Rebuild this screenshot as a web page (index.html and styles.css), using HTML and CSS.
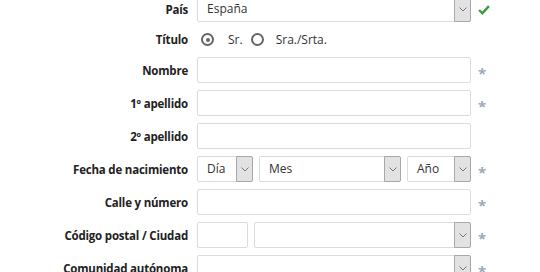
FILE: index.html
```html
<!DOCTYPE html>
<html lang="es">
<head>
    <meta charset="UTF-8">
    <title>Datos personales</title>
    <link rel="stylesheet" href="styles.css">
</head>
<body>
    <form class="form">
        <div class="row row-first">
            <label class="label">País</label>
            <div class="control">
                <div class="select full">
                    <span class="select-text">España</span>
                    <span class="arrow"><svg width="8" height="5" viewBox="0 0 8 5"><path d="M0.5 0.5 L4 4 L7.5 0.5" fill="none" stroke="#777" stroke-width="1"/></svg></span>
                </div>
            </div>
            <span class="mark">
                <svg class="check" width="11" height="9" viewBox="0 0 11 9"><path d="M1 4.5 L4 7.5 L10 1" fill="none" stroke="#3b9a3b" stroke-width="2.2"/></svg>
            </span>
        </div>

        <div class="row row-radio">
            <label class="label">Título</label>
            <div class="control radios">
                <span class="radio checked"></span><span class="radio-text">Sr.</span>
                <span class="radio"></span><span class="radio-text">Sra./Srta.</span>
            </div>
            <span class="mark"></span>
        </div>

        <div class="row">
            <label class="label">Nombre</label>
            <div class="control"><div class="input full"></div></div>
            <span class="mark star">*</span>
        </div>

        <div class="row">
            <label class="label">1º apellido</label>
            <div class="control"><div class="input full"></div></div>
            <span class="mark star">*</span>
        </div>

        <div class="row">
            <label class="label">2º apellido</label>
            <div class="control"><div class="input full"></div></div>
            <span class="mark"></span>
        </div>

        <div class="row">
            <label class="label">Fecha de nacimiento</label>
            <div class="control date">
                <div class="select day">
                    <span class="select-text">Día</span>
                    <span class="arrow"><svg width="8" height="5" viewBox="0 0 8 5"><path d="M0.5 0.5 L4 4 L7.5 0.5" fill="none" stroke="#777" stroke-width="1"/></svg></span>
                </div>
                <div class="select month">
                    <span class="select-text">Mes</span>
                    <span class="arrow"><svg width="8" height="5" viewBox="0 0 8 5"><path d="M0.5 0.5 L4 4 L7.5 0.5" fill="none" stroke="#777" stroke-width="1"/></svg></span>
                </div>
                <div class="select year">
                    <span class="select-text">Año</span>
                    <span class="arrow"><svg width="8" height="5" viewBox="0 0 8 5"><path d="M0.5 0.5 L4 4 L7.5 0.5" fill="none" stroke="#777" stroke-width="1"/></svg></span>
                </div>
            </div>
            <span class="mark star">*</span>
        </div>

        <div class="row">
            <label class="label">Calle y número</label>
            <div class="control"><div class="input full"></div></div>
            <span class="mark star">*</span>
        </div>

        <div class="row">
            <label class="label">Código postal / Ciudad</label>
            <div class="control city">
                <div class="input postal"></div>
                <div class="select grow">
                    <span class="select-text"></span>
                    <span class="arrow"><svg width="8" height="5" viewBox="0 0 8 5"><path d="M0.5 0.5 L4 4 L7.5 0.5" fill="none" stroke="#777" stroke-width="1"/></svg></span>
                </div>
            </div>
            <span class="mark star">*</span>
        </div>

        <div class="row">
            <label class="label">Comunidad autónoma</label>
            <div class="control">
                <div class="select full">
                    <span class="select-text"></span>
                    <span class="arrow"><svg width="8" height="5" viewBox="0 0 8 5"><path d="M0.5 0.5 L4 4 L7.5 0.5" fill="none" stroke="#777" stroke-width="1"/></svg></span>
                </div>
            </div>
            <span class="mark star">*</span>
        </div>
    </form>
</body>
</html>
```

FILE: styles.css
```css
* {
    margin: 0;
    padding: 0;
    box-sizing: border-box;
}

html {
    height: 272px;
    overflow: hidden;
}

body {
    background: #ffffff;
    color: #222222;
    font-family: "Open Sans", "Liberation Sans", Arial, sans-serif;
    font-size: 12px;
    overflow: hidden;
}

.form {
    margin-top: -4px;
}

.row {
    display: grid;
    grid-template-columns: 188px 274px 20px;
    column-gap: 9px;
    align-items: center;
    height: 26px;
    margin-bottom: 7px;
}

.row-radio {
    height: 21px;
    margin-top: 7px;
}

.label {
    text-align: right;
    font-weight: 700;
    font-size: 11.5px;
    letter-spacing: -0.2px;
    color: #222222;
    white-space: nowrap;
}

.control {
    display: flex;
    height: 100%;
    align-items: center;
}

.input,
.select {
    height: 26px;
    border: 1px solid #dcdcdc;
    border-radius: 2px;
    background: #ffffff;
}

.full {
    width: 100%;
}

.select {
    display: flex;
    align-items: stretch;
}

.select-text {
    flex: 1;
    padding-left: 9px;
    line-height: 24px;
    color: #333333;
}

.arrow {
    width: 17px;
    margin: -1px -1px -1px 0;
    background: #e2e2e2;
    border: 1px solid #a8a8a8;
    border-radius: 0 2px 2px 0;
    display: flex;
    align-items: center;
    justify-content: center;
}

.date {
    gap: 6px;
}

.day {
    width: 56px;
}

.month {
    width: 142px;
}

.year {
    width: 64px;
}

.city {
    gap: 6px;
}

.postal {
    width: 51px;
}

.grow {
    flex: 1;
}

.radios {
    padding-left: 4px;
}

.radio {
    width: 13px;
    height: 13px;
    border: 2px solid #666666;
    border-radius: 50%;
    position: relative;
}

.radio.checked::after {
    content: "";
    position: absolute;
    left: 2.5px;
    top: 2.5px;
    width: 4px;
    height: 4px;
    border-radius: 50%;
    background: #666666;
}

.radio-text {
    margin-left: 14px;
    margin-right: 8px;
    color: #333333;
}

.radio-text:last-child {
    margin-left: 12px;
}

.mark {
    display: flex;
    align-items: center;
    justify-content: flex-start;
    margin-left: -5px;
}

.check {
    margin-left: 3px;
    margin-top: 1px;
    width: 12px;
    height: 10px;
}

.star {
    color: #a0a8b4;
    font-size: 15px;
    font-weight: 700;
    padding-left: 3px;
    padding-top: 5px;
}
```
